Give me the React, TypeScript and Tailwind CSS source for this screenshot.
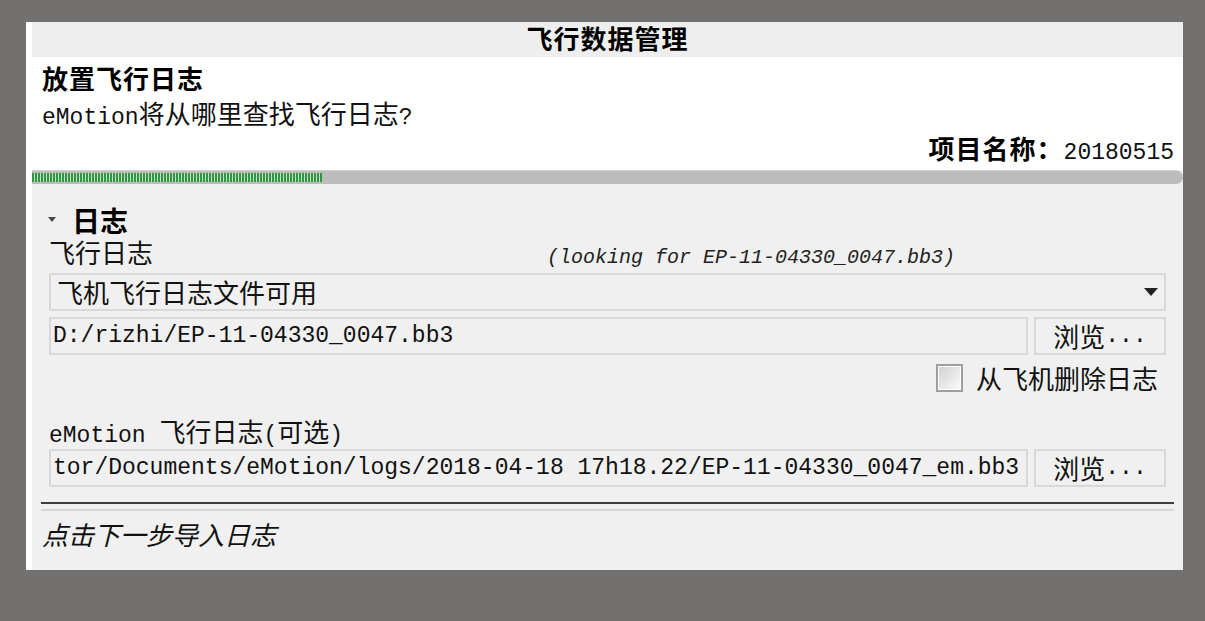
import React from "react";

const MONO = "font-['Liberation_Mono',monospace] text-[23px]";
const CJK = "font-['Noto_Sans_CJK_SC',sans-serif] text-[26px]";
const CJKB = "font-['Noto_Sans_CJK_SC',sans-serif] text-[26px] font-bold tracking-[1px]";
const MONO_I = "font-['Liberation_Mono',monospace] text-[20px] italic";

function Mixed({ text, mono, cjk }: { text: string; mono: string; cjk: string }) {
  const parts = text.match(/[\x00-\x7F]+|[^\x00-\x7F]+/g) || [];
  return (
    <>
      {parts.map((p, i) =>
        /^[\x00-\x7F]/.test(p) ? (
          <span key={i} className={mono}>
            {p}
          </span>
        ) : (
          <span key={i} className={cjk}>
            {p}
          </span>
        )
      )}
    </>
  );
}

function Button() {
  return (
    <div className="w-[132px] h-[38px] border-2 border-[#d8d8d8] bg-[#f0f0f0] flex items-center justify-center leading-[30px] text-[#111]">
      <Mixed text="浏览..." mono={MONO} cjk={CJK} />
    </div>
  );
}

export default function App() {
  return (
    <div className="w-[1205px] h-[621px] bg-[#727170] pt-[22px] pl-[26px] overflow-hidden">
      <div className="w-[1157px] h-[548px] flex bg-[#f0f0f0]">
        <div className="w-[6px] bg-white" />
        <div className="flex-1 flex flex-col min-w-0">
          {/* title bar */}
          <div className="h-[35px] bg-[#eeeeee] flex items-center justify-center pb-[3px]">
            <span className={`${CJKB} leading-[32px] text-black`}>飞行数据管理</span>
          </div>

          {/* white header */}
          <div className="h-[113px] bg-white pl-[10px] pr-[9px] flex flex-col">
            <div className={`${CJKB} mt-[6px] h-[30px] leading-[30px] text-black`}>放置飞行日志</div>
            <div className="mt-[5px] h-[30px] leading-[30px] text-[#111] whitespace-nowrap">
              <Mixed text="eMotion将从哪里查找飞行日志?" mono={MONO} cjk={CJK} />
            </div>
            <div className="mt-[5px] h-[30px] leading-[30px] text-[#111] flex justify-end items-baseline whitespace-nowrap">
              <span className={`${CJKB} text-black tracking-[0px]`}>项目名称：</span>
              <span className={MONO}>20180515</span>
            </div>
          </div>

          {/* progress bar */}
          <div className="h-[14px] bg-[#bcbcbc] rounded-r-[7px] border-t border-[#d2d2d2] flex items-center">
            <div className="w-[290px] h-[9px] bg-[repeating-linear-gradient(90deg,#2c9a3c_0px,#2c9a3c_2px,#cfd8cf_2px,#cfd8cf_3px)]" />
          </div>

          {/* gray body */}
          <div className="flex-1 px-[9px] flex flex-col">
            <div className="px-[8px] flex flex-col">
              {/* section header */}
              <div className="mt-[18px] h-[36px] flex items-center">
                <svg width="8" height="6" viewBox="0 0 8 6" className="ml-[-1px]">
                  <path d="M0 0 L8 0 L4 5 Z" fill="#4a4a4a" />
                </svg>
                <span className="ml-[16px] font-['Noto_Sans_CJK_SC',sans-serif] text-[28px] font-bold leading-[30px] text-black">
                  日志
                </span>
              </div>

              {/* label row */}
              <div className="h-[30px] leading-[28px] flex items-baseline text-[#111]">
                <div className="w-[498px]">
                  <span className={CJK}>飞行日志</span>
                </div>
                <span className={`${MONO_I} text-[#222]`}>(looking for EP-11-04330_0047.bb3)</span>
              </div>

              {/* dropdown */}
              <div className="mt-[5px] h-[38px] border-2 border-[#d8d8d8] bg-[#f0f0f0] flex items-center pl-[6px] pr-[6px]">
                <span className={`${CJK} leading-[30px] text-[#111] flex-1`}>飞机飞行日志文件可用</span>
                <svg width="14" height="8" viewBox="0 0 14 8">
                  <path d="M0 0 L14 0 L7 8 Z" fill="#222" />
                </svg>
              </div>

              {/* path input */}
              <div className="mt-[6px] flex gap-[6px]">
                <div className="flex-1 h-[38px] border-2 border-[#d8d8d8] bg-[#f0f0f0] flex items-center pl-[2px] overflow-hidden whitespace-nowrap">
                  <span className={`${MONO} leading-[30px] text-[#111]`}>D:/rizhi/EP-11-04330_0047.bb3</span>
                </div>
                <Button />
              </div>

              {/* checkbox */}
              <div className="mt-[9px] h-[28px] flex justify-end items-center pr-[8px]">
                <div className="w-[27px] h-[28px] border-2 border-[#9e9e9e] bg-white p-[1px]">
                  <div className="w-full h-full bg-gradient-to-br from-[#d2d2d2] to-[#fafafa]" />
                </div>
                <span className={`${CJK} ml-[13px] leading-[28px] text-[#111]`}>从飞机删除日志</span>
              </div>

              {/* emotion label */}
              <div className="mt-[24px] h-[30px] leading-[30px] text-[#111] whitespace-nowrap">
                <Mixed text="eMotion 飞行日志(可选)" mono={MONO} cjk={CJK} />
              </div>

              {/* second input */}
              <div className="mt-[3px] flex gap-[6px]">
                <div className="flex-1 h-[38px] border-2 border-[#d8d8d8] bg-[#f0f0f0] flex items-center pl-[2px] overflow-hidden whitespace-nowrap">
                  <span className={`${MONO} leading-[30px] text-[#111]`}>
                    tor/Documents/eMotion/logs/2018-04-18 17h18.22/EP-11-04330_0047_em.bb3
                  </span>
                </div>
                <Button />
              </div>
            </div>

            {/* separator */}
            <div className="mt-[15px] h-[2px] bg-[#3c3c3c]" />
            <div className="mt-[5px] h-[2px] bg-[#d6d6d6]" />

            {/* footer */}
            <div className={`${CJK} italic mt-[8px] pl-[1px] h-[30px] leading-[30px] text-[#111]`}>
              点击下一步导入日志
            </div>
          </div>
        </div>
      </div>
    </div>
  );
}
